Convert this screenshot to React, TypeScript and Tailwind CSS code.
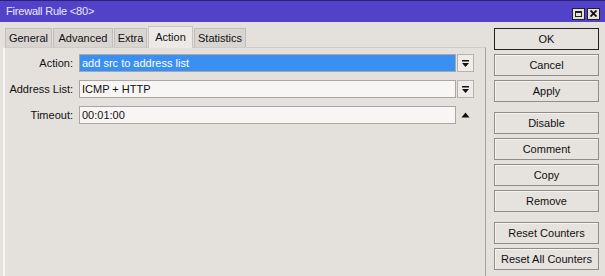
const tabs: [string, string][] = [
  ["General", "w-[47px]"],
  ["Advanced", "w-[60px]"],
  ["Extra", "w-[33px]"],
  ["Action", "w-[45px]"],
  ["Statistics", "w-[52px]"],
];

const DropIcon = () => (
  <svg width="9" height="9" viewBox="0 0 9 9">
    <rect x="1" y="1" width="7" height="1.5" fill="#111" />
    <path d="M1 4 L8 4 L4.5 8 Z" fill="#111" />
  </svg>
);

const Btn = ({ label, primary }: { label: string; primary?: boolean }) => (
  <div
    className={`h-[22px] w-[105px] flex items-center justify-center bg-[#e6e2de] text-[11px] text-[#111] ${
      primary ? "border border-[#222]" : "border border-[#8f8c89] shadow-[inset_1px_1px_0_#f6f4f2]"
    }`}
  >
    {label}
  </div>
);

const Field = ({
  label,
  value,
  selected,
  trailing,
}: {
  label: string;
  value: string;
  selected?: boolean;
  trailing: "drop" | "up";
}) => (
  <div className="flex items-center h-[18px]">
    <div className="w-[68px] text-right whitespace-nowrap text-[11px] text-[#111]">{label}</div>
    <div
      className={`ml-[6px] w-[377px] h-[18px] border border-[#a9a6a3] flex items-center pl-[2px] text-[11px] ${
        selected ? "bg-[#3a8ff2] text-white" : "bg-[#f8f6f4] text-[#111]"
      }`}
    >
      {value}
    </div>
    {trailing === "drop" ? (
      <div className="ml-[1px] w-[17px] h-[18px] border border-[#b5b2af] bg-[#eeebe8] flex items-center justify-center">
        <DropIcon />
      </div>
    ) : (
      <div className="ml-[1px] w-[17px] h-[18px] flex items-center justify-center">
        <svg width="9" height="6" viewBox="0 0 9 6">
          <path d="M0.5 5.5 L4.5 0.5 L8.5 5.5 Z" fill="#111" />
        </svg>
      </div>
    )}
  </div>
);

export default function App() {
  return (
    <div
      className="w-[605px] h-[276px] overflow-hidden bg-[#e4e0dc] flex flex-col"
      style={{ fontFamily: '"Liberation Sans", Arial, sans-serif' }}
    >
      {/* title bar */}
      <div className="h-[22px] shrink-0 bg-[#5142c9] border-t border-[#2a2270] flex items-center justify-between pl-[6px] pr-[5px]">
        <span className="text-[11px] tracking-[-0.2px] text-[#eceaf6]">Firewall Rule &lt;80&gt;</span>
        <div className="flex gap-[2px] mt-[4px]">
          <div className="w-[13px] h-[12px] bg-[#e4e0dc] border border-[#222] flex items-center justify-center">
            <div className="w-[7px] h-[6px] border border-[#222] border-t-2" />
          </div>
          <div className="w-[13px] h-[12px] bg-[#e4e0dc] border border-[#222] flex items-center justify-center">
            <svg width="7" height="7" viewBox="0 0 7 7">
              <path d="M0.5 0.5 L6.5 6.5 M6.5 0.5 L0.5 6.5" stroke="#111" strokeWidth="1.8" />
            </svg>
          </div>
        </div>
      </div>

      <div className="flex flex-1">
        {/* left: tabs and panel */}
        <div className="w-[486px] pl-[3px] pt-[3px] flex flex-col">
          <div className="flex items-end h-[22px] pl-[2px] gap-[1px]">
            {tabs.map(([t, w]) =>
              t === "Action" ? (
                <div
                  key={t}
                  className={`${w} h-[22px] flex items-center justify-center bg-[#ece9e6] border border-b-0 border-[#c9c5c1] text-[11px] text-[#111] -mb-[1px] relative z-10`}
                >
                  {t}
                </div>
              ) : (
                <div
                  key={t}
                  className={`${w} h-[19px] flex items-center justify-center bg-[#d9d5d1] border border-b-0 border-[#c2beba] text-[11px] text-[#111]`}
                >
                  {t}
                </div>
              )
            )}
          </div>
          <div className="flex-1 bg-[#e4e0dc] border-l-2 border-t border-r border-l-[#f7f5f3] border-t-[#cfcbc7] border-r-[#a8a5a2] pt-[6px] flex flex-col gap-[8px]">
            <Field label="Action:" value="add src to address list" selected trailing="drop" />
            <Field label="Address List:" value="ICMP + HTTP" trailing="drop" />
            <Field label="Timeout:" value="00:01:00" trailing="up" />
          </div>
        </div>

        {/* right: buttons */}
        <div className="ml-[8px] pt-[6px] flex flex-col">
          <div className="flex flex-col gap-[4px]">
            <Btn label="OK" primary />
            <Btn label="Cancel" />
            <Btn label="Apply" />
          </div>
          <div className="flex flex-col gap-[4px] mt-[10px]">
            <Btn label="Disable" />
            <Btn label="Comment" />
            <Btn label="Copy" />
            <Btn label="Remove" />
          </div>
          <div className="flex flex-col gap-[4px] mt-[10px]">
            <Btn label="Reset Counters" />
            <Btn label="Reset All Counters" />
          </div>
        </div>
      </div>
    </div>
  );
}
